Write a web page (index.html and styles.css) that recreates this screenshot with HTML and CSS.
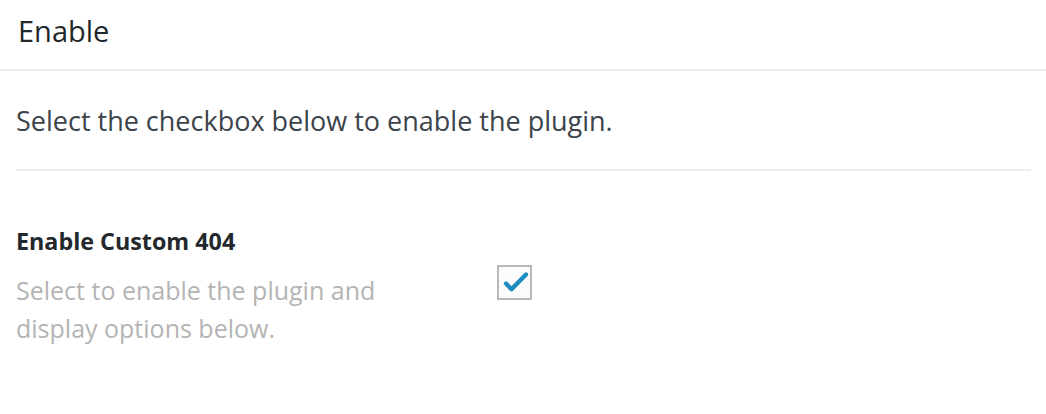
FILE: index.html
```html
<!DOCTYPE html>
<html>
<head>
<meta charset="utf-8">
<link rel="stylesheet" href="styles.css">
</head>
<body>
<div class="panel">
  <div class="panel-head"><h2 class="title">Enable</h2></div>
  <div class="panel-body">
    <p class="intro">Select the checkbox below to enable the plugin.</p>
    <div class="row">
      <div class="label-col">
        <div class="label">Enable Custom 404</div>
        <div class="desc">Select to enable the plugin and<br>display options below.</div>
      </div>
      <div class="field-col">
        <span class="checkbox">
          <svg viewBox="0 0 31 31" width="31" height="31"><path d="M7 16.5 L12.5 22.2 L27 7.5" fill="none" stroke="#1e8cbe" stroke-width="4.4" stroke-linecap="round" stroke-linejoin="round"/></svg>
        </span>
      </div>
    </div>
  </div>
</div>
</body>
</html>
```
FILE: styles.css
```css
* { box-sizing: border-box; }
html, body { margin: 0; padding: 0; background: #fff; }
body { font-family: "Open Sans", "Noto Sans", sans-serif; color: #3c434a; }
.panel-head {
  height: 71px;
  border-bottom: 2px solid #eeeeee;
  padding: 11px 18px 0;
}
.title {
  margin: 0;
  font-size: 29px;
  font-weight: 500;
  color: #23282d;
  line-height: 40px;
}
.panel-body { padding: 0 15px 0 16px; }
.intro {
  margin: 0;
  height: 100px;
  padding-top: 33px;
  font-size: 27px;
  line-height: 34px;
  color: #3c434a;
  border-bottom: 2px solid #eeeeee;
}
.row { display: flex; padding-top: 53px; }
.label-col { width: 481px; }
.label {
  font-size: 23.3px;
  font-weight: 700;
  color: #23282d;
  line-height: 34px;
}
.desc {
  margin-top: 13px;
  font-size: 25px;
  line-height: 38px;
  color: #b4b4b4;
}
.field-col { padding-top: 41px; }
.checkbox {
  display: block;
  width: 35px;
  height: 35px;
  border: 2px solid #b4b9be;
  background: #fbfbfb;
}
.checkbox svg { display: block; }
```
